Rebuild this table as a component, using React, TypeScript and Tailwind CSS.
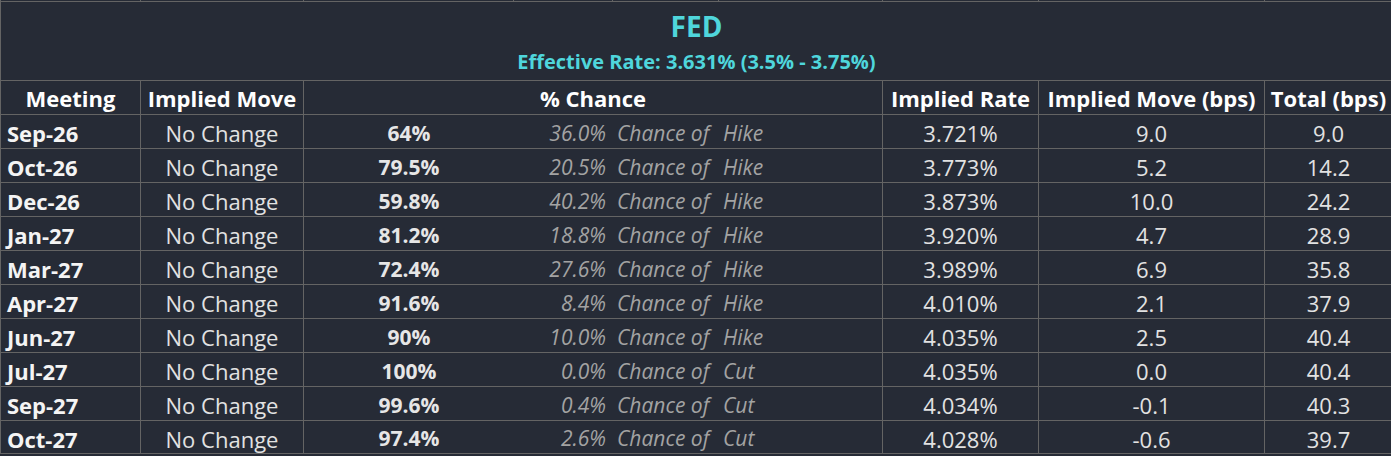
const rows = [
  { m: "Sep-26", pct: "64%", ch: "36.0%", dir: "Hike", rate: "3.721%", move: "9.0", total: "9.0" },
  { m: "Oct-26", pct: "79.5%", ch: "20.5%", dir: "Hike", rate: "3.773%", move: "5.2", total: "14.2" },
  { m: "Dec-26", pct: "59.8%", ch: "40.2%", dir: "Hike", rate: "3.873%", move: "10.0", total: "24.2" },
  { m: "Jan-27", pct: "81.2%", ch: "18.8%", dir: "Hike", rate: "3.920%", move: "4.7", total: "28.9" },
  { m: "Mar-27", pct: "72.4%", ch: "27.6%", dir: "Hike", rate: "3.989%", move: "6.9", total: "35.8" },
  { m: "Apr-27", pct: "91.6%", ch: "8.4%", dir: "Hike", rate: "4.010%", move: "2.1", total: "37.9" },
  { m: "Jun-27", pct: "90%", ch: "10.0%", dir: "Hike", rate: "4.035%", move: "2.5", total: "40.4" },
  { m: "Jul-27", pct: "100%", ch: "0.0%", dir: "Cut", rate: "4.035%", move: "0.0", total: "40.4" },
  { m: "Sep-27", pct: "99.6%", ch: "0.4%", dir: "Cut", rate: "4.034%", move: "-0.1", total: "40.3" },
  { m: "Oct-27", pct: "97.4%", ch: "2.6%", dir: "Cut", rate: "4.028%", move: "-0.6", total: "39.7" },
];

const line = "border-[#646464]";

export default function App() {
  return (
    <div className="h-[456px] w-[1391px] overflow-hidden bg-[#262b36] font-['Open_Sans','Noto_Sans',sans-serif] text-[22px] text-[#e2e2e2]">
      <div className={`grid grid-cols-[140px_163px_210px_99px_106px_164px_156px_226px_127px] border-l ${line}`}>
        {/* sliver of the row above */}
        {[0, 1, 2, 3, 4, 5, 6, 7, 8].map((i) => (
          <div key={i} className={`h-[2px] border-b ${line} ${i < 8 ? "border-r" : ""}`} />
        ))}

        {/* title */}
        <div className={`col-span-9 flex h-[79px] flex-col items-center border-b ${line} font-bold text-[#4fd6dc]`}>
          <div className="mt-[5px] text-[28px] leading-[38px]">FED</div>
          <div className="mt-[3px] text-[20px] leading-[28px]">Effective Rate: 3.631% (3.5% - 3.75%)</div>
        </div>

        {/* header */}
        <Head>Meeting</Head>
        <Head>Implied Move</Head>
        <div className={`col-span-4 flex h-[34px] items-center justify-center border-r border-b ${line} leading-none font-bold text-white`}>
          % Chance
        </div>
        <Head>Implied Rate</Head>
        <Head>Implied Move (bps)</Head>
        <Head last>Total (bps)</Head>

        {rows.map((r, i) => {
          const h = i === rows.length - 1 ? "h-[33px]" : "h-[34px]";
          const cell = `${h} flex items-center border-b ${line} pt-[3px] leading-none whitespace-nowrap`;
          return (
            <div key={r.m} className="contents">
              <div className={`${cell} border-r pl-[6px] font-bold text-[#f4f4f4]`}>{r.m}</div>
              <div className={`${cell} justify-center border-r`}>No Change</div>
              <div className={`${cell} justify-center text-[21px] font-bold text-[#e6e6e6]`}>{r.pct}</div>
              <div className={`${cell} justify-end pr-[7px] text-[21px] italic text-[#a3a3a3]`}>{r.ch}</div>
              <div className={`${cell} pl-[4px] text-[21px] italic text-[#a3a3a3]`}>Chance of</div>
              <div className={`${cell} border-r pl-[4px] text-[21px] italic text-[#a3a3a3]`}>{r.dir}</div>
              <div className={`${cell} justify-center border-r`}>{r.rate}</div>
              <div className={`${cell} justify-center border-r`}>{r.move}</div>
              <div className={`${cell} justify-center`}>{r.total}</div>
            </div>
          );
        })}
      </div>
    </div>
  );
}

function Head({ children, last }: { children: React.ReactNode; last?: boolean }) {
  return (
    <div
      className={`flex h-[34px] items-center justify-center border-b ${line} ${last ? "" : "border-r"} leading-none whitespace-nowrap font-bold text-white`}
    >
      {children}
    </div>
  );
}
